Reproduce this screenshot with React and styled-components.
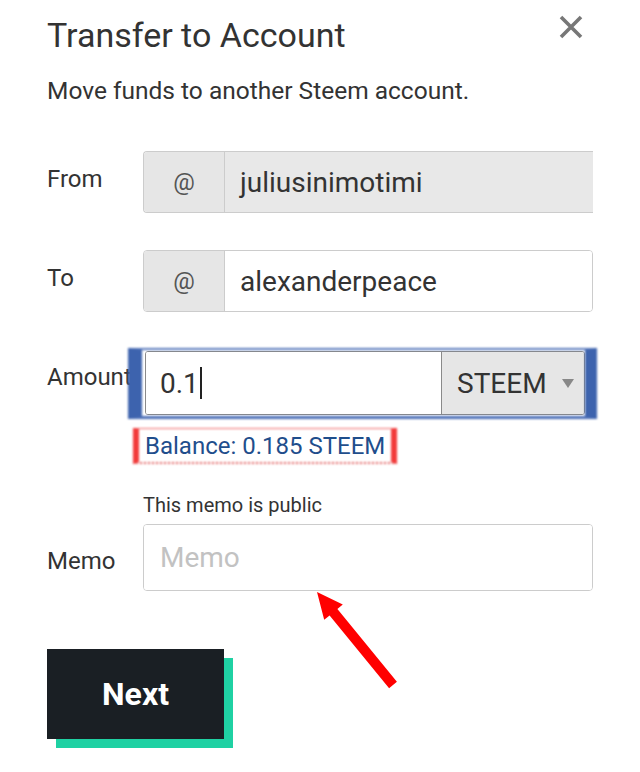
import React from "react"
import styled, { createGlobalStyle } from "styled-components"

const GlobalStyle = createGlobalStyle`
  html, body {
    margin: 0;
    padding: 0;
    background: #ffffff;
  }
  body {
    font-family: Roboto, "Liberation Sans", sans-serif;
    color: #333333;
  }
  * {
    box-sizing: border-box;
  }
`

const Page = styled.div`
  position: relative;
  width: 640px;
  height: 772px;
  padding: 16px 0 0 47px;
  overflow: hidden;
`

const Header = styled.div`
  display: flex;
  justify-content: space-between;
  align-items: flex-start;
  padding-right: 56px;
`

const Title = styled.h2`
  margin: 0;
  font-weight: 400;
  font-size: 34px;
  line-height: 38px;
  color: #333333;
`

const Close = styled.button`
  border: 0;
  background: none;
  padding: 0;
  margin-top: -2px;
  width: 26px;
  height: 26px;
  cursor: pointer;
`

const Subtitle = styled.p`
  margin: 24px 0 0;
  font-size: 24.5px;
  line-height: 26px;
  color: #333333;
`

const Row = styled.div`
  display: grid;
  grid-template-columns: 96px 450px;
  align-items: center;
  margin-top: ${p => p.$gap}px;
`

const Label = styled.label`
  font-size: 24px;
  line-height: 26px;
  color: #333333;
  margin-top: ${p => p.$shift || -6}px;
`

const Group = styled.div`
  display: flex;
  height: ${p => p.$h || 62}px;
  border: 1px solid #cccccc;
  border-radius: 4px;
  overflow: hidden;
  ${p => p.$open && "border-right: 0; border-radius: 4px 0 0 4px;"}
`

const Addon = styled.div`
  width: 81px;
  flex: none;
  display: flex;
  align-items: center;
  justify-content: center;
  background: #e6e6e6;
  border-right: 1px solid #cccccc;
  font-size: 24px;
  color: #555555;
`

const Field = styled.div`
  flex: 1;
  display: flex;
  align-items: center;
  padding-left: ${p => p.$pad || 15}px;
  font-size: 28px;
  color: ${p => (p.$placeholder ? "#c2c2c2" : "#333333")};
  background: ${p => (p.$disabled ? "#e8e8e8" : "#ffffff")};
`

const Caret = styled.span`
  display: inline-block;
  width: 2px;
  height: 32px;
  margin-left: 1px;
  background: #222222;
`

const AmountCell = styled.div`
  position: relative;
  margin-left: 2px;
  width: 440px;
`

const AmountGroup = styled.div`
  display: flex;
  height: 64px;
  border: 1px solid #8a8a8a;
  border-radius: 3px;
  overflow: hidden;
`

const Select = styled.div`
  width: 143px;
  flex: none;
  display: flex;
  align-items: center;
  justify-content: space-between;
  padding: 0 10px 0 15px;
  background: #e6e6e6;
  border-left: 1px solid #8a8a8a;
  font-size: 28px;
  color: #333333;
`

const Arrow = styled.span`
  width: 0;
  height: 0;
  border-left: 6px solid transparent;
  border-right: 6px solid transparent;
  border-top: 9px solid #888888;
`

const BlueMark = styled.div`
  position: absolute;
  left: -17px;
  right: -12px;
  top: -3px;
  bottom: -4px;
  border-left: 14px solid #3d63ae;
  border-right: 12px solid #3d63ae;
  border-top: 2px solid #5677bb;
  border-bottom: 3px solid #4a6db6;
  filter: blur(1.3px);
  pointer-events: none;
`

const BalanceRow = styled.div`
  margin: 16px 0 0 98px;
`

const Balance = styled.span`
  position: relative;
  display: inline-block;
  font-size: 24px;
  line-height: 30px;
  color: #1f4e8c;
`

const RedMark = styled.span`
  position: absolute;
  left: -12px;
  right: -12px;
  top: -3px;
  bottom: -3px;
  border-left: 6px solid #f23b3b;
  border-right: 6px solid #f23b3b;
  border-top: 1px solid #f06a6a;
  border-bottom: 2px dotted #e05555;
  filter: blur(1px);
  pointer-events: none;
`

const Hint = styled.div`
  margin: 32px 0 0 96px;
  font-size: 20px;
  line-height: 24px;
  color: #333333;
`

const NextWrap = styled.div`
  margin-top: 58px;
  width: 186px;
  height: 100px;
  position: relative;
`

const NextButton = styled.button`
  width: 177px;
  height: 90px;
  border: 0;
  background: #1a1f24;
  color: #ffffff;
  font-family: Roboto, "Liberation Sans", sans-serif;
  font-weight: 700;
  font-size: 32px;
  box-shadow: 9px 9px 0 #1fd1a3;
  cursor: pointer;
`

const Annotation = styled.svg`
  position: absolute;
  left: 0;
  top: 0;
  pointer-events: none;
`

export default function App() {
  return (
    <>
      <GlobalStyle />
      <Page>
        <Header>
          <Title>Transfer to Account</Title>
          <Close aria-label="close">
            <svg width="26" height="26" viewBox="0 0 26 26">
              <path d="M3 3 L23 23 M23 3 L3 23" stroke="#777777" strokeWidth="3.6" />
            </svg>
          </Close>
        </Header>
        <Subtitle>Move funds to another Steem account.</Subtitle>

        <Row $gap={47}>
          <Label>From</Label>
          <Group $open>
            <Addon>@</Addon>
            <Field $disabled>juliusinimotimi</Field>
          </Group>
        </Row>

        <Row $gap={37}>
          <Label>To</Label>
          <Group>
            <Addon>@</Addon>
            <Field>alexanderpeace</Field>
          </Group>
        </Row>

        <Row $gap={39}>
          <Label $shift={-13}>Amount</Label>
          <AmountCell>
            <AmountGroup>
              <Field $pad={14}>0.1<Caret /></Field>
              <Select>
                STEEM
                <Arrow />
              </Select>
            </AmountGroup>
            <BlueMark />
          </AmountCell>
        </Row>

        <BalanceRow>
          <Balance>
            Balance: 0.185 STEEM
            <RedMark />
          </Balance>
        </BalanceRow>

        <Hint>This memo is public</Hint>
        <Row $gap={7}>
          <Label $shift={6}>Memo</Label>
          <Group $h={67}>
            <Field $placeholder $pad={16}>Memo</Field>
          </Group>
        </Row>

        <NextWrap>
          <NextButton>Next</NextButton>
        </NextWrap>

        <Annotation width="640" height="772" viewBox="0 0 640 772">
          <polygon
            points="317,592 342.8,604.6 337.4,609 396.9,681.8 389.1,688.2 329.6,615.4 324.2,619.8"
            fill="#ff0000"
          />
        </Annotation>
      </Page>
    </>
  )
}
